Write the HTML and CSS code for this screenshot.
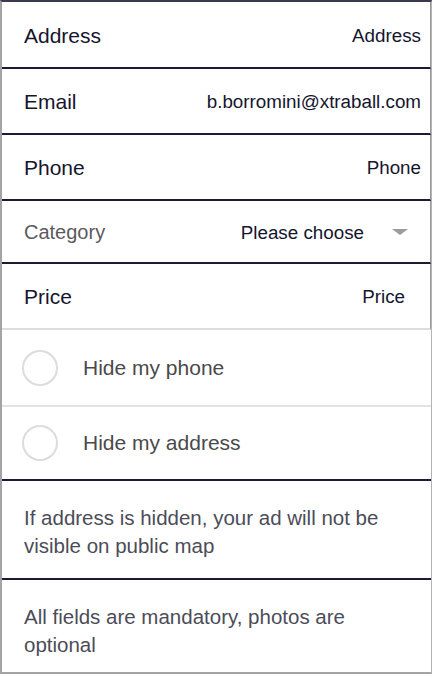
FILE: index.html
```html
<!DOCTYPE html>
<html lang="en">
<head>
    <meta charset="UTF-8">
    <title>Ad details</title>
    <link rel="stylesheet" href="styles.css">
</head>
<body>
    <div class="sheet">
        <div class="field first">
            <span class="label">Address</span>
            <span class="value">Address</span>
        </div>
        <div class="field">
            <span class="label">Email</span>
            <span class="value">b.borromini@xtraball.com</span>
        </div>
        <div class="field">
            <span class="label">Phone</span>
            <span class="value">Phone</span>
        </div>
        <div class="field select">
            <span class="label light">Category</span>
            <span class="value">Please choose</span>
            <span class="arrow"></span>
        </div>
        <div class="field last">
            <span class="label">Price</span>
            <span class="value price">Price</span>
        </div>

        <div class="check">
            <span class="circle"></span>
            <span class="checkText">Hide my phone</span>
        </div>
        <div class="check end">
            <span class="circle"></span>
            <span class="checkText">Hide my address</span>
        </div>

        <div class="note">If address is hidden, your ad will not be visible on public map</div>
        <div class="note bottom">All fields are mandatory, photos are optional</div>
    </div>
</body>
</html>
```

FILE: styles.css
```css
*{
    box-sizing: border-box;
}
body{
    margin: 0;
    background: #fff;
    font-family: "Liberation Sans", Arial, sans-serif;
}
.sheet{
    width: 432px;
    border-left: 2px solid #a4a4a4;
    border-right: 1px solid #b4b4b4;
    border-bottom: 2px solid #a4a4a4;
    border-top: 2px solid #3a3a4e;
}
.field{
    display: flex;
    align-items: center;
    height: 66px;
    padding: 2px 9px 0 22px;
    border-bottom: 2px solid #1b1b36;
    border-right: 1px solid #9a9a9a;
    color: #15152e;
}
.field.first{
    height: 67px;
}
.field.select{
    height: 63px;
}
.field.last{
    border-bottom: 2px solid #dcdcdc;
}
.label{
    font-size: 21px;
    flex: 1;
}
.label.light{
    color: #5a5a5e;
    font-size: 20px;
}
.value{
    font-size: 18.8px;
}
.value.price{
    margin-right: 16px;
}
.arrow{
    width: 0;
    height: 0;
    margin: 0 13px 2px 28px;
    border-left: 8px solid transparent;
    border-right: 8px solid transparent;
    border-top: 6px solid #9c9c9c;
}
.check{
    display: flex;
    align-items: center;
    height: 77px;
    padding: 0 0 0 20px;
    border-bottom: 2px solid #e2e2e2;
    color: #4a4a4a;
}
.check.end{
    height: 74px;
    border-bottom: 2px solid #1b1b36;
}
.circle{
    width: 36px;
    height: 36px;
    border: 2px solid #dcdcdc;
    border-radius: 50%;
}
.checkText{
    margin-left: 25px;
    font-size: 21px;
}
.note{
    height: 99px;
    padding: 23px 24px 0 22px;
    border-bottom: 2px solid #1b1b36;
    font-size: 20.5px;
    line-height: 28px;
    color: #4c4c58;
}
.note.bottom{
    height: 92px;
    border-bottom: none;
}
```
